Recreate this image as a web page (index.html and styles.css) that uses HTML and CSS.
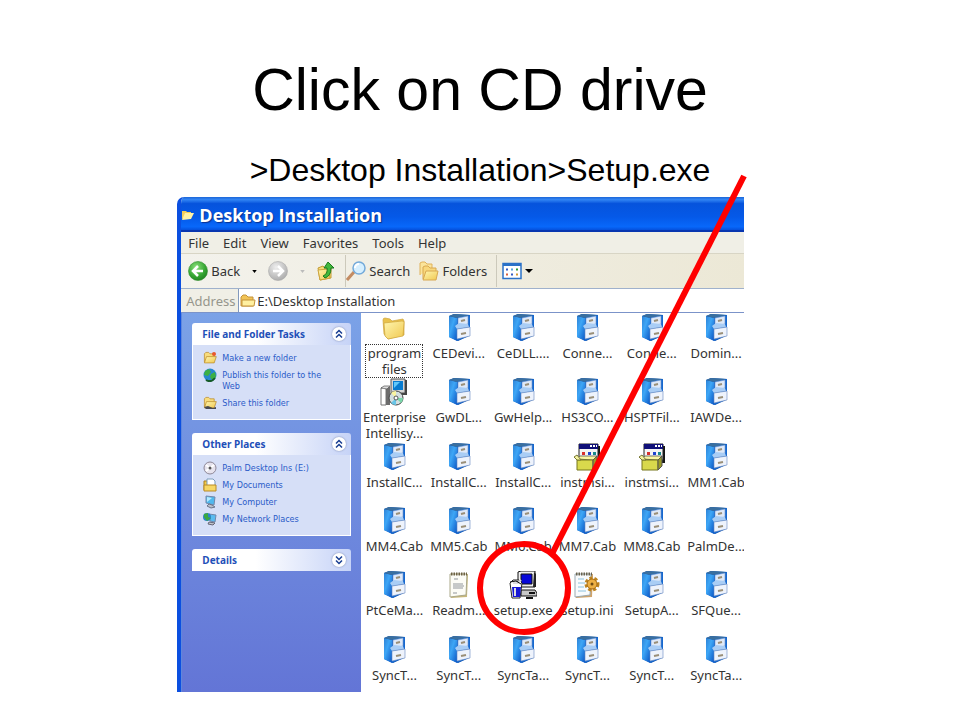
FILE: index.html
```html
<!DOCTYPE html>
<html lang="en">
<head>
<meta charset="utf-8">
<title>Click on CD drive</title>
<link rel="stylesheet" href="styles.css">
</head>
<body>
<svg class="defs" aria-hidden="true">
  <defs>
    <linearGradient id="blue" x1="0" x2="1" y2="1"><stop offset="0" stop-color="#2f83d6"/><stop offset=".4" stop-color="#3da6f6"/><stop offset="1" stop-color="#0a55c4"/></linearGradient>
    <linearGradient id="yellow" x1="0" y1="0" x2="1" y2="1"><stop offset="0" stop-color="#fff6b0"/><stop offset="1" stop-color="#f0c850"/></linearGradient>
    <radialGradient id="green" cx=".4" cy=".3" r=".8"><stop offset="0" stop-color="#8be07c"/><stop offset=".6" stop-color="#35a532"/><stop offset="1" stop-color="#1c7a1c"/></radialGradient>
    <radialGradient id="grey" cx=".4" cy=".3" r=".8"><stop offset="0" stop-color="#eee"/><stop offset="1" stop-color="#a5a5a5"/></radialGradient>
    <symbol id="cab" viewBox="0 0 28 28">
      <path d="M4 2 9 0 25 1 24 22 13 27 4 23Z" fill="#0b4fae"/>
      <path d="M4 2 12 4V27L4 23Z" fill="url(#blue)"/>
      <path d="M4 2 9 0 25 1 12 4Z" fill="#3a6f9f"/>
      <path d="M12 4 25 1V21L12 27Z" fill="#1668cf"/>
      <path d="M13 4 23 2V10L13 12Z" fill="#dfe9f8" stroke="#6f95cd" stroke-width=".6"/>
      <path d="M10 12 14 9 23 10 24 13 12 15Z" fill="#a9cdf5"/>
      <path d="M12 15 25 13V22L12 25Z" fill="#eef3fc" stroke="#6688bf" stroke-width=".6"/>
      <path d="M16 7 20 6M16 20 21 19" stroke="#9a8f78" stroke-width="2"/>
    </symbol>
    <symbol id="folder" viewBox="0 0 28 28">
      <path d="M3 6Q3 4 5 4L10 5 12 7 23 5 24 7V21L8 25 4 20Z" fill="#e9c24c" stroke="#cfa53d" stroke-width=".7"/>
      <path d="M4 9 22 7Q25 7 24 9L23 22 8 25 5 22Z" fill="url(#yellow)" stroke="#d0a63c" stroke-width=".7"/>
    </symbol>
    <symbol id="open" viewBox="0 0 20 20">
      <path d="M2 16V4L4 2H8L10 4H16V8" fill="#f8dc7c" stroke="#b98724"/>
      <path d="M2 17 5 8H19L16 17Z" fill="url(#yellow)" stroke="#b98724"/>
    </symbol>
    <symbol id="installer" viewBox="0 0 28 28">
      <path d="M11 1H25V15H11Z" fill="#d5d5d5" stroke="#555"/><path d="M13 3H23V12H13Z" fill="#087bcf"/><path d="M14 4H20L14 10Z" fill="#61c8fa"/>
      <path d="M26 2V16H20" fill="none" stroke="#444" stroke-width="2"/>
      <path d="M1 10 6 9V27H1Z" fill="#fff" stroke="#777"/><path d="M6 9H10V27H6Z" fill="#6c6c6c"/><path d="M1 10 4 8H10L7 11Z" fill="#ddd" stroke="#555" stroke-width=".7"/>
      <circle cx="16" cy="20" r="7" fill="#d3dedf" stroke="#444"/><path d="M16 20 11 15A7 7 0 0 1 16 13Z" fill="#faf4a0"/><path d="M16 20 21 25A7 7 0 0 0 23 20Z" fill="#79d7aa"/><path d="M16 20 16 27A7 7 0 0 1 11 25Z" fill="#69c6e8"/><circle cx="16" cy="20" r="2" fill="#fff" stroke="#555"/>
    </symbol>
    <symbol id="msi" viewBox="0 0 28 28">
      <path d="M8 3H27V20H24V9Z" fill="#151515"/><path d="M6 1H25V17H6Z" fill="#f4f4f4" stroke="#222"/><path d="M6 1H25V6H6Z" fill="#101078"/><path d="M17 3H19M20 3H22M23 3H24" stroke="#fff" stroke-width="2"/>
      <path d="M9 9H12V12H9Z" fill="#d9302c"/><path d="M15 9H18V12H15Z" fill="#1e43d0"/><path d="M20 9H23V12H20Z" fill="#188a8a"/>
      <path d="M4 16 7 13H24L20 17Z" fill="#faf6a0" stroke="#555" stroke-width=".8"/><path d="M4 17H20V27H4Z" fill="#d9d94c" stroke="#77771c"/><path d="M20 17 24 13V23L20 27Z" fill="#9b9b26" stroke="#555"/>
      <path d="M4 17 1 14 4 12 8 17Z" fill="#f5f3a2" stroke="#777733"/>
    </symbol>
    <symbol id="note" viewBox="0 0 28 28">
      <path d="M6 3H23L22 26 6 27Z" fill="#c7b779"/><path d="M5 3H22L21 24 5 26Z" fill="#fcfcf6" stroke="#aaa88a"/>
      <path d="M6 3H22" stroke="#6d6244" stroke-width="3" stroke-dasharray="1.500 1"/>
      <path d="M9 8H13M8 13H18M8 15H19M8 17H18M8 22H12" stroke="#91969b"/>
    </symbol>
    <symbol id="ini" viewBox="0 0 28 28">
      <path d="M3 3H20L19 26 3 27Z" fill="#cfa36a"/><path d="M2 3H18L17 24 2 26Z" fill="#f8fbfd" stroke="#9baab2"/>
      <path d="M3 3H19" stroke="#69634e" stroke-width="3" stroke-dasharray="1.500 1"/>
      <path d="M5 8H11M5 12H12M5 16H11M5 20H13" stroke="#8cc1de"/>
      <circle cx="19" cy="13" r="6" fill="none" stroke="#bd8421" stroke-width="3" stroke-dasharray="3 2"/><circle cx="19" cy="13" r="5" fill="#edb044" stroke="#a66b12"/><circle cx="19" cy="13" r="1.500" fill="#6d4b16"/>
    </symbol>
    <symbol id="setup" viewBox="0 0 28 28">
      <path d="M9 1 12 0H26V16H9Z" fill="#eee" stroke="#111"/><path d="M12 3H23V13H12Z" fill="#0808d8" stroke="#111"/><path d="M25 1 27 3V16H24" fill="#222"/>
      <path d="M12 19H26L28 22V25H12Z" fill="#c8c8c8" stroke="#111"/><path d="M20 22H26M17 27H24" stroke="#111" stroke-width="2"/>
      <path d="M1 12 4 9H10L13 12 11 27H3Z" fill="#fff" stroke="#222"/><path d="M3 16H12L11 26H4Z" fill="#1717d6"/><path d="M4 12H9L12 9M6 17V25" stroke="#ddd" stroke-width="2"/><path d="M1 11 7 10 12 13" fill="none" stroke="#111"/>
    </symbol>
    <symbol id="up" viewBox="0 0 14 14"><path d="M4 6.500 7 3.500 10 6.500M4 10.500 7 7.500 10 10.500" fill="none" stroke="#173d91" stroke-width="1.500"/></symbol>
    <symbol id="down" viewBox="0 0 14 14"><path d="M4 3.500 7 6.500 10 3.500M4 7.500 7 10.500 10 7.500" fill="none" stroke="#173d91" stroke-width="1.500"/></symbol>
  </defs>
</svg>

<main class="slide">
  <h1 class="title">Click on CD drive</h1>
  <p class="subtitle">&gt;Desktop Installation&gt;Setup.exe</p>

  <div class="figure">
    <section class="window" aria-label="Desktop Installation">
      <header class="titlebar"><svg class="i12" viewBox="0 0 12 12"><path d="M0 10V2H4L5 3H9V5Z" fill="#f4cf5a"/><path d="M0 11 3 4H12L9 10Z" fill="#fff3a6"/></svg><h2>Desktop Installation</h2></header>
      <nav class="menubar">
        <button>File</button><button>Edit</button><button>View</button><button>Favorites</button><button>Tools</button><button>Help</button>
      </nav>
      <div class="toolbar">
        <button><svg class="i20" viewBox="0 0 20 20"><circle cx="10" cy="10" r="9.500" fill="url(#green)" stroke="#2d8c2c" stroke-width=".6"/><path d="M10 5 5 10 10 15M5.500 10H15" fill="none" stroke="#fff" stroke-width="2.500"/></svg>Back</button>
        <button class="drop" aria-label="Back history"><svg viewBox="0 0 6 4"><path d="M0 0H6L3 4Z"/></svg></button>
        <button class="forward" aria-label="Forward"><svg class="i20" viewBox="0 0 20 20"><circle cx="10" cy="10" r="9.500" fill="url(#grey)" stroke="#aaa" stroke-width=".6"/><path d="M10 5 15 10 10 15M14.500 10H5" fill="none" stroke="#fff" stroke-width="2.500"/></svg></button>
        <button class="drop pale" aria-label="Forward history"><svg viewBox="0 0 6 4"><path d="M0 0H6L3 4Z"/></svg></button>
        <button class="parent" aria-label="Up"><svg class="i20" viewBox="0 0 20 20"><path d="M2 7 7 5 9 7 15 6V17L4 19Z" fill="#f6dc78" stroke="#c39a34"/><path d="M2 9 12 8 14 17 4 19Z" fill="url(#yellow)" stroke="#cda43f"/><path d="M7 15Q12 13 11 7H8L12 1 18 7H15Q15 15 9 17Z" fill="#42b83c" stroke="#19791d"/></svg></button>
        <button class="search"><svg class="i20" viewBox="0 0 20 20"><path d="M1 19 8 11" stroke="#c38b62" stroke-width="3"/><circle cx="13" cy="7" r="6" fill="#d6efff" stroke="#74aada" stroke-width="1.500"/><path d="M9 7A4 4 0 0 1 13 3" fill="none" stroke="#fff" stroke-width="2"/></svg>Search</button>
        <button class="folders"><svg class="i20" viewBox="0 0 20 20"><path d="M1 14V2L3 1H6L8 3H13V7" fill="#fbe49a" stroke="#e0b25a"/><path d="M4 18V6L6 5H9L11 7H17V10" fill="#f8d77b" stroke="#d8a850"/><path d="M4 19 7 10H19L17 19Z" fill="url(#yellow)" stroke="#d8a850"/></svg>Folders</button>
        <button class="views" aria-label="Views"><svg class="i20" viewBox="0 0 20 17"><path d="M1 1H19V16H1Z" fill="#fff" stroke="#2b72c8" stroke-width="1.500"/><path d="M1 2H19" stroke="#2b72c8" stroke-width="3"/><path d="M4 6H6V8H4ZM9 11H11V13H9Z" fill="#345bc2"/><path d="M9 6H11V8H9Z" fill="#55a3df"/><path d="M14 6H16V8H14Z" fill="#2c9a35"/><path d="M4 11H6V13H4Z" fill="#d7603c"/><path d="M14 11H16V13H14Z" fill="#d39a35"/></svg><svg class="caret" viewBox="0 0 8 4"><path d="M0 0H8L4 4Z"/></svg></button>
      </div>
      <div class="address">
        <label for="address">Address</label>
        <div class="field"><svg class="i16" viewBox="0 0 16 16"><path d="M1 13V4L3 2H6L8 4H13V13Z" fill="#f2c456" stroke="#c4933a"/><path d="M2 7H15L14 13H2Z" fill="#fff0a0" stroke="#c4933a"/></svg><input id="address" value="E:\Desktop Installation"></div>
      </div>
      <div class="content">
        <aside class="tasks">
          <section class="panel">
            <header><h3>File and Folder Tasks</h3><button aria-label="Collapse"><svg class="i14"><use href="#up"/></svg></button></header>
            <ul>
              <li><svg class="i14"><use href="#open"/><circle cx="11" cy="3" r="2" fill="#e8582c"/></svg><a href="#">Make a new folder</a></li>
              <li><svg class="i14" viewBox="0 0 14 14"><circle cx="7" cy="7" r="6.500" fill="#2787cf"/><path d="M2 3 6 1 8 4 5 8 1 7ZM8 6 12 4 13 9 9 12 7 9Z" fill="#3cb044"/><path d="M3 12Q8 15 12 10" fill="none" stroke="#155b29" stroke-width="2"/></svg><a href="#">Publish this folder to the Web</a></li>
              <li><svg class="i14"><use href="#open"/><path d="M1 11 5 10 10 12 13 11V13H3Z" fill="#49494f"/></svg><a href="#">Share this folder</a></li>
            </ul>
          </section>
          <section class="panel">
            <header><h3>Other Places</h3><button aria-label="Collapse"><svg class="i14"><use href="#up"/></svg></button></header>
            <ul>
              <li><svg class="i14" viewBox="0 0 14 14"><circle cx="7" cy="7" r="6" fill="#e6e3ee" stroke="#8d8796"/><path d="M3 4 7 7 3 10M11 4 7 7" stroke="#fff" stroke-width="2" fill="none"/><circle cx="7" cy="7" r="1.500" fill="#555"/></svg><a href="#">Palm Desktop Ins (E:)</a></li>
              <li><svg class="i14" viewBox="0 0 14 14"><path d="M1 3H5V12H1Z" fill="#f2ca48" stroke="#a97e20"/><path d="M4 1H10L12 3V9H4Z" fill="#fff" stroke="#7d9dbb"/><path d="M1 7H13V13H1Z" fill="#f7d765" stroke="#b98a27"/></svg><a href="#">My Documents</a></li>
              <li><svg class="i14" viewBox="0 0 14 14"><path d="M3 1 12 2 11 10 3 8Z" fill="#50b8ee" stroke="#7487a8"/><path d="M4 2 9 3 4 7Z" fill="#b5eaff"/><path d="M6 9 9 10 12 12 8 13 4 11Z" fill="#bbc0ca" stroke="#68738a"/></svg><a href="#">My Computer</a></li>
              <li><svg class="i14" viewBox="0 0 14 14"><path d="M6 2 13 3 12 10 7 9Z" fill="#5bbcf0" stroke="#7187aa"/><circle cx="4" cy="5" r="4" fill="#2c83c9"/><path d="M1 2 5 1 5 5 8 6 4 9 1 5Z" fill="#3aa842"/><path d="M6 10 12 11 10 13 5 12Z" fill="#c3c6cd" stroke="#667"/></svg><a href="#">My Network Places</a></li>
            </ul>
          </section>
          <section class="panel">
            <header><h3>Details</h3><button aria-label="Expand"><svg class="i14"><use href="#down"/></svg></button></header>
          </section>
        </aside>
        <div class="files">
          <a href="#" class="selected"><svg><use href="#folder"/></svg><span>program files</span></a>
          <a href="#"><svg><use href="#cab"/></svg><span>CEDevi...</span></a>
          <a href="#"><svg><use href="#cab"/></svg><span>CeDLL....</span></a>
          <a href="#"><svg><use href="#cab"/></svg><span>Conne...</span></a>
          <a href="#"><svg><use href="#cab"/></svg><span>Conne...</span></a>
          <a href="#"><svg><use href="#cab"/></svg><span>Domin...</span></a>

          <a href="#"><svg><use href="#installer"/></svg><span>Enterprise Intellisy...</span></a>
          <a href="#"><svg><use href="#cab"/></svg><span>GwDL...</span></a>
          <a href="#"><svg><use href="#cab"/></svg><span>GwHelp...</span></a>
          <a href="#"><svg><use href="#cab"/></svg><span>HS3CO...</span></a>
          <a href="#"><svg><use href="#cab"/></svg><span>HSPTFil...</span></a>
          <a href="#"><svg><use href="#cab"/></svg><span>IAWDe...</span></a>

          <a href="#"><svg><use href="#cab"/></svg><span>InstallC...</span></a>
          <a href="#"><svg><use href="#cab"/></svg><span>InstallC...</span></a>
          <a href="#"><svg><use href="#cab"/></svg><span>InstallC...</span></a>
          <a href="#"><svg><use href="#msi"/></svg><span>instmsi...</span></a>
          <a href="#"><svg><use href="#msi"/></svg><span>instmsi...</span></a>
          <a href="#"><svg><use href="#cab"/></svg><span>MM1.Cab</span></a>

          <a href="#"><svg><use href="#cab"/></svg><span>MM4.Cab</span></a>
          <a href="#"><svg><use href="#cab"/></svg><span>MM5.Cab</span></a>
          <a href="#"><svg><use href="#cab"/></svg><span>MM6.Cab</span></a>
          <a href="#"><svg><use href="#cab"/></svg><span>MM7.Cab</span></a>
          <a href="#"><svg><use href="#cab"/></svg><span>MM8.Cab</span></a>
          <a href="#"><svg><use href="#cab"/></svg><span>PalmDe...</span></a>

          <a href="#"><svg><use href="#cab"/></svg><span>PtCeMa...</span></a>
          <a href="#"><svg><use href="#note"/></svg><span>Readm...</span></a>
          <a href="#"><svg><use href="#setup"/></svg><span>setup.exe</span></a>
          <a href="#"><svg><use href="#ini"/></svg><span>setup.ini</span></a>
          <a href="#"><svg><use href="#cab"/></svg><span>SetupA...</span></a>
          <a href="#"><svg><use href="#cab"/></svg><span>SFQue...</span></a>

          <a href="#"><svg><use href="#cab"/></svg><span>SyncT...</span></a>
          <a href="#"><svg><use href="#cab"/></svg><span>SyncT...</span></a>
          <a href="#"><svg><use href="#cab"/></svg><span>SyncTa...</span></a>
          <a href="#"><svg><use href="#cab"/></svg><span>SyncT...</span></a>
          <a href="#"><svg><use href="#cab"/></svg><span>SyncT...</span></a>
          <a href="#"><svg><use href="#cab"/></svg><span>SyncTa...</span></a>
        </div>
      </div>
    </section>
    <svg class="callout" viewBox="0 0 567 495" aria-hidden="true">
      <path d="M567-21 375 357" stroke="#f00" stroke-width="6"/>
      <ellipse cx="347" cy="391" rx="44" ry="44" fill="none" stroke="#f00" stroke-width="6"/>
    </svg>
  </div>
</main>
</body>
</html>
```
FILE: styles.css
```css
* { box-sizing: border-box; }

body {
  margin: 0;
  background: #fff;
  color: #000;
  font-family: "Liberation Sans", Arial, sans-serif;
}

button, input {
  margin: 0;
  padding: 0;
  border: 0;
  background: none;
  color: inherit;
  font: inherit;
}

a { color: inherit; text-decoration: none; }
svg { display: block; flex: none; }
.defs { position: absolute; width: 0; height: 0; }
.i12 { width: 12px; height: 12px; }
.i14 { width: 14px; height: 14px; }
.i16 { width: 16px; height: 16px; }
.i20 { width: 20px; height: 20px; }

.slide { padding: 56px 0 28px; }

.title {
  margin: 0;
  font-size: 59px;
  font-weight: 400;
  line-height: 68px;
  text-align: center;
}

.subtitle {
  margin: 28px 0 9px;
  font-size: 32px;
  line-height: 36px;
  text-align: center;
}

.figure {
  position: relative;
  max-width: 567px;
  margin: 0 auto;
  left: -2%;
}

.callout {
  position: absolute;
  inset: 0;
  width: 100%;
  overflow: visible;
  pointer-events: none;
}

.window {
  overflow: hidden;
  border-left: 4px solid #0b4fe0;
  border-top-left-radius: 7px;
  background: #f0efe6;
  color: #333;
  font: 13px/16px "Noto Sans", Tahoma, sans-serif;
}

.titlebar {
  display: flex;
  align-items: center;
  gap: 5px;
  height: 35px;
  margin-left: -4px;
  padding: 3px 0 0 5px;
  border-bottom: 2px solid #0836b0;
  background: linear-gradient(#1c66d8, #3285f4 8%, #0653dc 20%, #0559e8 60%, #0868fa 90%, #0550dc);
}

.titlebar h2 {
  margin: 0;
  color: #fff;
  font: 700 18px/20px "Open Sans", "Trebuchet MS", sans-serif;
  text-shadow: 1px 1px 1px #0a318f;
}

.menubar {
  display: flex;
  align-items: center;
  gap: 14px;
  height: 22px;
  padding-left: 7px;
  border-bottom: 1px solid #d8d5c5;
}

.toolbar {
  display: flex;
  align-items: center;
  height: 35px;
  padding-left: 7px;
  border-bottom: 1px solid #9fb1cc;
  background: linear-gradient(100deg, #f3f2ec, #ece8d6);
}

.toolbar button { display: flex; align-items: center; gap: 3px; }
.toolbar .drop { width: 28px; justify-content: center; }
.drop svg { width: 5px; height: 3px; }
.toolbar .pale { fill: #bbb; }
.toolbar .search { height: 32px; margin-left: 9px; border-left: 1px solid #ccc9bb; }
.toolbar .folders { margin-left: 9px; }
.toolbar .views { height: 32px; margin-left: 9px; padding-left: 5px; border-left: 1px solid #ccc9bb; }
.caret { width: 8px; height: 4px; }

.address { display: flex; height: 24px; border-bottom: 1px solid #7b93c9; }
.address label { width: 57px; padding: 4px 0 0 5px; color: #96968c; }
.field {
  display: flex;
  flex: 1;
  align-items: center;
  gap: 1px;
  padding-left: 1px;
  border-left: 1px solid #8299bd;
  background: #fff;
}
.field input { flex: 1; min-width: 0; }

.content { display: flex; border-left: 1px solid #5f87dd; background: #fff; }

.tasks {
  display: flex;
  flex: 0 0 179px;
  flex-direction: column;
  gap: 13px;
  padding: 10px;
  background: linear-gradient(#7ba2e7, #6375d6);
  color: #2a5bc8;
  font: 9px/11px "DejaVu Sans Condensed", Tahoma, sans-serif;
}

.panel header {
  display: flex;
  align-items: center;
  justify-content: space-between;
  height: 22px;
  padding: 0 5px 0 10px;
  border-radius: 3px 3px 0 0;
  background: linear-gradient(90deg, #fff 40%, #c6d3f7);
}
.panel h3 {
  margin: 0;
  color: #1f50b8;
  font: 700 10px/14px "Noto Sans", Tahoma, sans-serif;
}
.panel header button { border-radius: 50%; background: #fff; box-shadow: 0 0 2px #7786ad; }
.panel ul {
  margin: 0;
  padding: 5px 10px 7px;
  border: 1px solid #fff;
  border-top: 0;
  background: #d6dff7;
  list-style: none;
}
.panel li { display: flex; gap: 5px; padding: 3px 0; }
.panel li svg { margin: -2px 0 -1px; }

.files {
  display: grid;
  flex: 1;
  grid-template-columns: repeat(6, minmax(0, 1fr));
  grid-template-rows: repeat(6, 1fr);
  height: 386px;
  margin: 0 -4px -7px 1px;
}

.files a {
  display: flex;
  flex-direction: column;
  align-items: center;
  gap: 3px;
  height: 64px;
  padding-top: 1px;
  text-align: center;
}
.files svg { width: 28px; height: 28px; }
.files .selected span { width: 56px; outline: 1px dotted #333; }
```
